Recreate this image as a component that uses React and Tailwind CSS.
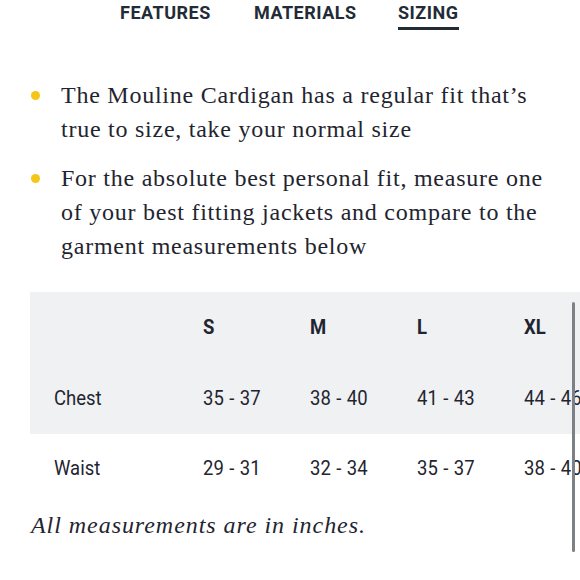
export default function App() {
  const serif = { fontFamily: '"Liberation Serif", "DejaVu Serif", serif' };
  const cond = { fontFamily: 'Roboto, "Liberation Sans", sans-serif' };
  const cols = [
    { h: "S", c: "35 - 37", w: "29 - 31" },
    { h: "M", c: "38 - 40", w: "32 - 34" },
    { h: "L", c: "41 - 43", w: "35 - 37" },
    { h: "XL", c: "44 - 46", w: "38 - 40" },
  ];
  const T = ({ children, bold }) => (
    <span className={"inline-block origin-left scale-x-[0.88] whitespace-nowrap text-[21px] [word-spacing:1px] " + (bold ? "font-bold" : "font-normal")}>{children}</span>
  );
  const Tab = ({ children, w, active }) => (
    <div className={w}>
      <div className={"inline-block " + (active ? "border-b-[3px] border-[#232b36] pb-[3px]" : "pb-[6px]")}>
        <span className="block text-[18px] font-bold tracking-[0.5px] leading-[22px] text-[#232b36] whitespace-nowrap">{children}</span>
      </div>
    </div>
  );
  return (
    <div className="relative w-[580px] h-[580px] overflow-hidden bg-white text-[#1f2530]">
      <div className="flex pl-[120px] pt-[2px]" style={{ fontFamily: 'Roboto, "Liberation Sans", sans-serif' }}>
        <Tab w="w-[134px]">FEATURES</Tab>
        <Tab w="w-[144px]">MATERIALS</Tab>
        <Tab w="w-[62px]" active>SIZING</Tab>
      </div>

      <ul className="mt-[48px] pl-[31px] pr-[20px] flex flex-col gap-[15px]" style={serif}>
        <li className="flex items-start">
          <span className="mt-[13px] w-[9px] h-[9px] rounded-full bg-[#f5c518] shrink-0 mr-[21px]"></span>
          <span className="text-[24px] leading-[34px] tracking-[0.75px]">The Mouline Cardigan has a regular fit that’s true to size, take your normal size</span>
        </li>
        <li className="flex items-start">
          <span className="mt-[13px] w-[9px] h-[9px] rounded-full bg-[#f5c518] shrink-0 mr-[21px]"></span>
          <span className="text-[24px] leading-[34px] tracking-[0.75px]">For the absolute best personal fit, measure one of your best fitting jackets and compare to the garment measurements below</span>
        </li>
      </ul>

      <div className="ml-[30px] mt-[29px] w-[550px] overflow-hidden text-[#1f2530]" style={cond}>
        <div className="w-[640px]">
          <div className="flex h-[72px] items-center bg-[#eff1f3]">
            <div className="w-[173px]"></div>
            {cols.map((c) => (
              <div key={c.h} className="w-[107px]"><T bold>{c.h}</T></div>
            ))}
          </div>
          <div className="flex h-[70px] items-center bg-[#eff1f3]">
            <div className="w-[173px] pl-[24px]"><T>Chest</T></div>
            {cols.map((c) => (
              <div key={c.h} className="w-[107px]"><T>{c.c}</T></div>
            ))}
          </div>
          <div className="flex h-[70px] items-center">
            <div className="w-[173px] pl-[24px]"><T>Waist</T></div>
            {cols.map((c) => (
              <div key={c.h} className="w-[107px]"><T>{c.w}</T></div>
            ))}
          </div>
        </div>
      </div>
      <div className="pl-[31px] mt-[4px] text-[24px] italic leading-[34px] tracking-[0.95px]" style={serif}>All measurements are in inches.</div>

      <div className="absolute left-[572px] top-[302px] w-[3px] h-[250px] rounded-full bg-[#7d8084]"></div>
    </div>
  );
}
